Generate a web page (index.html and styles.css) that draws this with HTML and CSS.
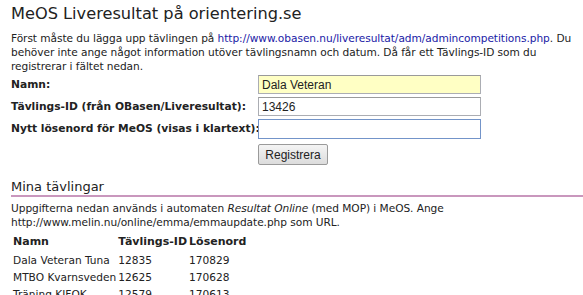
FILE: index.html
```html
<!DOCTYPE html>
<html lang="sv">
<head>
    <meta charset="UTF-8">
    <title>MeOS Liveresultat</title>
    <link rel="stylesheet" href="styles.css">
</head>
<body>
    <h1>MeOS Liveresultat på orientering.se</h1>
    <p class="intro">Först måste du lägga upp tävlingen på <a href="#">http://www.obasen.nu/liveresultat/adm/admincompetitions.php</a>. Du behöver inte ange något information utöver tävlingsnamn och datum. Då får ett Tävlings-ID som du registrerar i fältet nedan.</p>

    <form class="reg-form">
        <label for="namn">Namn:</label>
        <input type="text" id="namn" class="filled" value="Dala Veteran">

        <label for="tid">Tävlings-ID (från OBasen/Liveresultat):</label>
        <input type="text" id="tid" value="13426">

        <label for="pw">Nytt lösenord för MeOS (visas i klartext):</label>
        <input type="text" id="pw" class="focused">

        <span></span>
        <div class="actions"><button type="button">Registrera</button></div>
    </form>

    <h2>Mina tävlingar</h2>
    <p class="info">Uppgifterna nedan används i automaten <em>Resultat Online</em> (med MOP) i MeOS. Ange http://www.melin.nu/online/emma/emmaupdate.php som URL.</p>

    <table class="comps">
        <tr class="head"><th>Namn</th><th>Tävlings-ID</th><th>Lösenord</th></tr>
        <tr><td>Dala Veteran Tuna</td><td>12835</td><td>170829</td></tr>
        <tr><td>MTBO Kvarnsveden</td><td>12625</td><td>170628</td></tr>
        <tr><td>Träning KIFOK</td><td>12579</td><td>170613</td></tr>
    </table>
</body>
</html>
```

FILE: styles.css
```css
* {
    box-sizing: border-box;
    margin: 0;
    padding: 0;
}

body {
    font-family: "DejaVu Sans", Verdana, sans-serif;
    font-size: 11px;
    line-height: 14px;
    color: #222;
    background: #fff;
    padding: 4px 0 0 11px;
}

h1 {
    font-size: 16.2px;
    font-weight: normal;
    line-height: 20px;
    color: #222;
}

a {
    color: #1a1aa6;
    text-decoration: none;
}

.intro,
.info {
    font-size: 10.6px;
    letter-spacing: -0.05px;
    padding-right: 2px;
}

.intro {
    margin-top: 7px;
}

.reg-form {
    display: grid;
    grid-template-columns: 247px 223px;
    row-gap: 3px;
    align-items: center;
    margin-top: 2px;
}

.reg-form label {
    font-weight: bold;
    font-size: 10.7px;
    white-space: nowrap;
}

.reg-form input {
    height: 19px;
    border: 1px solid #abadb3;
    border-top-color: #9a9a9a;
    padding: 0 3px;
    font-family: "Liberation Sans", Arial, sans-serif;
    font-size: 12px;
    color: #222;
}

.reg-form input.filled {
    background: #ffffc4;
}

.reg-form input.focused {
    border-color: #7394c9;
    height: 20px;
}

.actions {
    padding-top: 2px;
}

.reg-form button {
    font-family: "Liberation Sans", Arial, sans-serif;
    font-size: 12px;
    padding: 2px 5px;
    height: 21px;
    width: 70px;
    border: 1px solid #9a9a9a;
    border-radius: 2px;
    background: linear-gradient(#f4f4f4, #dcdcdc);
    color: #222;
}

h2 {
    font-size: 13px;
    font-weight: normal;
    line-height: 16px;
    margin-top: 14px;
    border-bottom: 2px solid #c997bd;
}

.info {
    margin-top: 4px;
}

.comps {
    border-collapse: collapse;
    margin: 4px 0 0 1px;
}

.comps tr {
    height: 17px;
}

.comps tr.head {
    height: 18px;
}

.comps th,
.comps td {
    text-align: left;
    padding: 0 1px;
    line-height: 14px;
}

.comps td {
    font-size: 10.6px;
}
```
